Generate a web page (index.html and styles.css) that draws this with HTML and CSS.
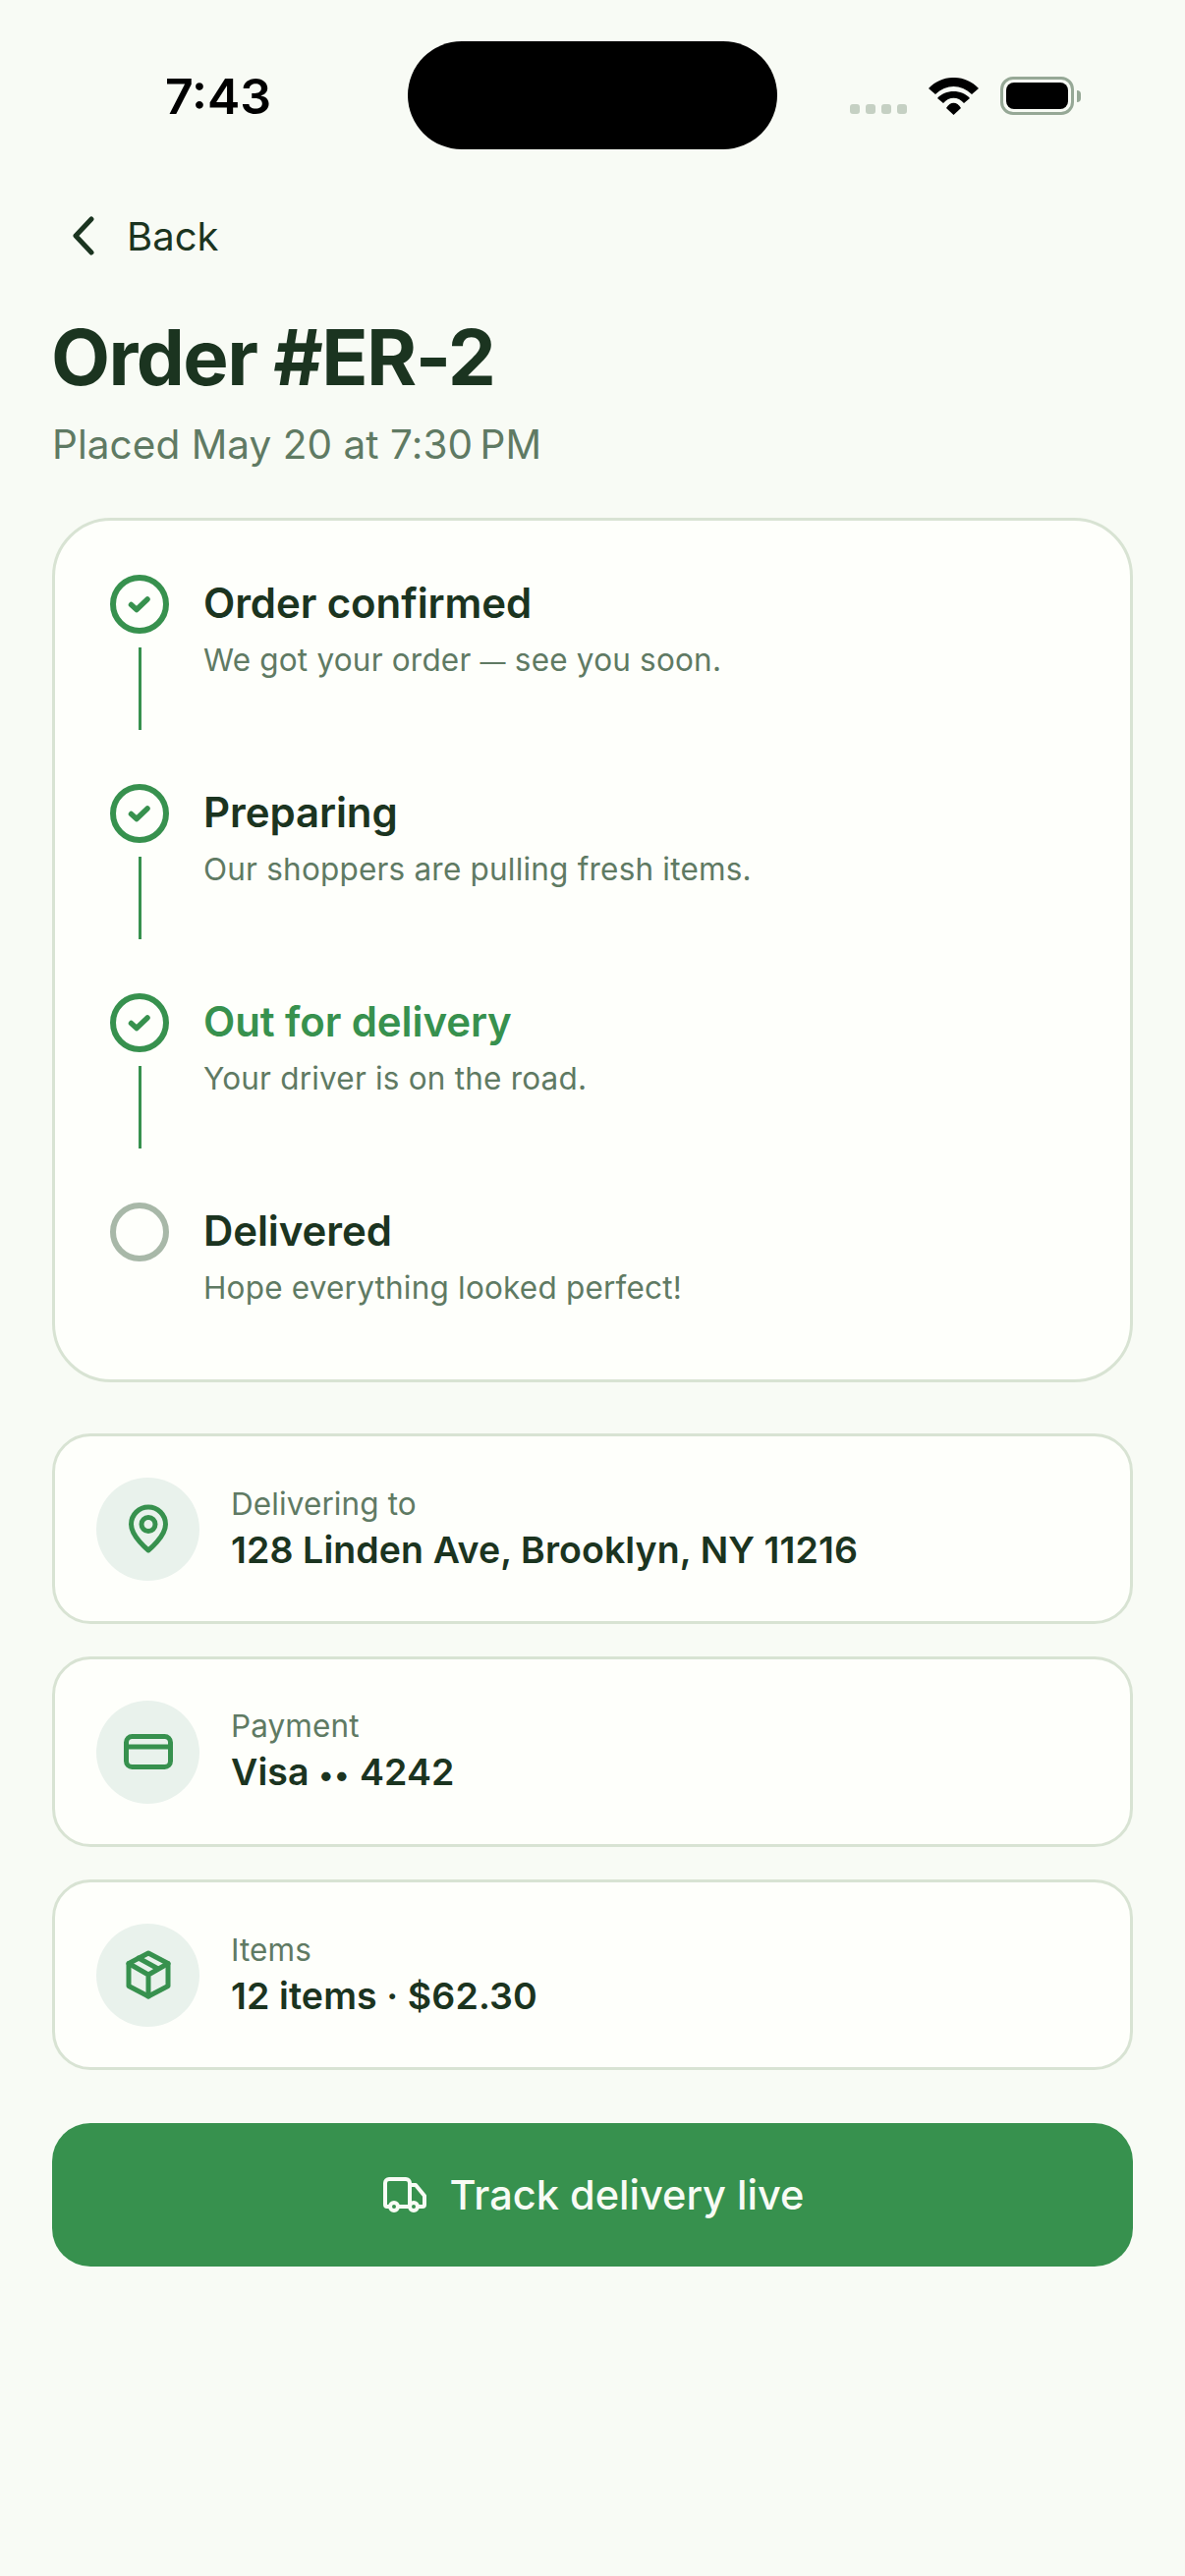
FILE: index.html
```html
<!DOCTYPE html>
<html lang="en">
<head>
    <meta charset="UTF-8">
    <meta name="viewport" content="width=device-width, initial-scale=1.0">
    <title>Order #ER-2</title>
    <link rel="stylesheet" href="styles.css">
</head>
<body>

<div class="status-bar">
    <div class="status-time">7:43</div>
    <div class="island"></div>
    <div class="status-icons">
        <div class="signal"><span></span><span></span><span></span><span></span></div>
        <svg class="wifi" width="51" height="38" viewBox="0 0 51 38">
            <path d="M0 11 C14 -3.7 37 -3.7 51 11 L44 17 C33 6.3 18 6.3 7 17 Z"/>
            <path d="M9 21 C17 11.7 34 11.7 42 21 L36 26 C30 19 21 19 15 26 Z"/>
            <path d="M18 31 C22 24 29 24 33 31 L25.5 38 Z"/>
        </svg>
        <div class="battery"><div class="battery-level"></div></div>
        <div class="battery-cap"></div>
    </div>
</div>

<div class="page">
    <a class="back" href="#">
        <svg width="36" height="48" viewBox="0 0 36 48"><path d="M27 7 L11 24 L27 41"/></svg>
        <span>Back</span>
    </a>
    <h1>Order #ER-2</h1>
    <p class="placed">Placed May 20 at 7:30&#8201;PM</p>

    <div class="card timeline">
        <div class="step">
            <div class="marker">
                <div class="circle"><svg width="30" height="30" viewBox="0 0 30 30"><path d="M6.5 15.5 L12 20.5 L23 10"/></svg></div>
                <div class="line"></div>
            </div>
            <div class="step-text">
                <div class="step-title">Order confirmed</div>
                <div class="step-sub">We got your order <span class="dash">—</span> see you soon.</div>
            </div>
        </div>
        <div class="step">
            <div class="marker">
                <div class="circle"><svg width="30" height="30" viewBox="0 0 30 30"><path d="M6.5 15.5 L12 20.5 L23 10"/></svg></div>
                <div class="line"></div>
            </div>
            <div class="step-text">
                <div class="step-title">Preparing</div>
                <div class="step-sub">Our shoppers are pulling fresh items.</div>
            </div>
        </div>
        <div class="step">
            <div class="marker">
                <div class="circle"><svg width="30" height="30" viewBox="0 0 30 30"><path d="M6.5 15.5 L12 20.5 L23 10"/></svg></div>
                <div class="line"></div>
            </div>
            <div class="step-text">
                <div class="step-title current">Out for delivery</div>
                <div class="step-sub">Your driver is on the road.</div>
            </div>
        </div>
        <div class="step">
            <div class="marker">
                <div class="circle pending"></div>
            </div>
            <div class="step-text">
                <div class="step-title">Delivered</div>
                <div class="step-sub">Hope everything looked perfect!</div>
            </div>
        </div>
    </div>

    <div class="card info">
        <div class="info-icon">
            <svg width="48" height="60" viewBox="0 0 48 60"><path d="M24 52 C24 52 6.5 38 6.5 25.5 A17.5 17.5 0 0 1 41.5 25.5 C41.5 38 24 52 24 52 Z"/><circle cx="24" cy="25.5" r="7"/></svg>
        </div>
        <div>
            <div class="info-label">Delivering to</div>
            <div class="info-value">128 Linden Ave, Brooklyn, NY 11216</div>
        </div>
    </div>
    <div class="card info">
        <div class="info-icon">
            <svg width="54" height="54" viewBox="0 0 54 54"><rect x="4.5" y="11.5" width="45" height="31" rx="6"/><path d="M4.5 22 H49.5"/></svg>
        </div>
        <div>
            <div class="info-label">Payment</div>
            <div class="info-value">Visa <span class="dots">••</span> 4242</div>
        </div>
    </div>
    <div class="card info">
        <div class="info-icon">
            <svg width="54" height="54" viewBox="0 0 54 54"><path d="M27 5 L47 15.5 V38.5 L27 49 L7 38.5 V15.5 Z"/><path d="M7 15.5 L27 27 L47 15.5 M27 27 V49 M17 10 L37 21"/></svg>
        </div>
        <div>
            <div class="info-label">Items</div>
            <div class="info-value">12 items · $62.30</div>
        </div>
    </div>

    <button class="track" type="button">
        <svg width="44" height="36" viewBox="0 0 44 36"><path d="M7 30 H4 A2 2 0 0 1 2 28 V6 A4 4 0 0 1 6 2 H23 A4 4 0 0 1 27 6 V30 H15 M27 8 H33 L42 19 V28 A2 2 0 0 1 40 30 H35"/><circle cx="11" cy="30" r="4"/><circle cx="31" cy="30" r="4"/></svg>
        <span>Track delivery live</span>
    </button>
</div>

</body>
</html>
```
FILE: styles.css
```css
* {
    box-sizing: border-box;
}
body {
    margin: 0;
    width: 1206px;
    height: 2622px;
    background-color: #f8fbf5;
    font-family: Inter, "Liberation Sans", sans-serif;
    color: #1b3420;
    overflow: hidden;
}

/* status bar */
.status-bar {
    position: relative;
    height: 210px;
}
.status-time {
    position: absolute;
    left: 168px;
    top: 68px;
    font-size: 50px;
    line-height: 60px;
    font-weight: 600;
    color: #000;
}
.island {
    position: absolute;
    left: 415px;
    top: 42px;
    width: 376px;
    height: 110px;
    background: #000;
    border-radius: 55px;
}
.status-icons {
    position: absolute;
    left: 865px;
    top: 78px;
    display: flex;
    align-items: center;
}
.signal {
    display: flex;
    gap: 6px;
    margin-top: 27px;
    margin-right: 22px;
}
.signal span {
    width: 10px;
    height: 10px;
    border-radius: 3px;
    background: #c5d0c3;
}
.wifi {
    fill: #000;
    margin-right: 22px;
}
.battery {
    width: 75px;
    height: 39px;
    border: 3px solid #96a896;
    border-radius: 13px;
    padding: 3px;
}
.battery-level {
    height: 100%;
    background: #000;
    border-radius: 8px;
}
.battery-cap {
    width: 4px;
    height: 12px;
    margin-left: 3px;
    background: #96a896;
    border-radius: 0 5px 5px 0;
}

.page {
    padding: 0 53px;
}

.back {
    display: flex;
    align-items: center;
    gap: 27px;
    height: 60px;
    margin-left: 13px;
    color: #1b3420;
    text-decoration: none;
    font-size: 40px;
}
.back svg path {
    fill: none;
    stroke: #1b3420;
    stroke-width: 5;
    stroke-linecap: round;
    stroke-linejoin: round;
}
h1 {
    margin: 49px 0 0 -1px;
    font-size: 78px;
    line-height: 90px;
    font-weight: 700;
    letter-spacing: -1.6px;
}
.placed {
    margin: 17px 0 0;
    font-size: 40.5px;
    line-height: 54px;
    letter-spacing: 0.05px;
    color: #5f7a63;
}

.card {
    background: #fefffb;
    border: 3px solid #d8e3d3;
}
.timeline {
    margin-top: 47px;
    padding: 55px 56px 0;
    height: 880px;
    border-radius: 60px;
}
.step {
    display: flex;
    gap: 35px;
    height: 213px;
}
.marker {
    display: flex;
    flex-direction: column;
    align-items: center;
    width: 60px;
}
.circle {
    display: flex;
    align-items: center;
    justify-content: center;
    width: 60px;
    height: 60px;
    border: 6px solid #37914e;
    border-radius: 50%;
}
.circle svg path {
    fill: none;
    stroke: #37914e;
    stroke-width: 5.5;
    stroke-linecap: round;
    stroke-linejoin: round;
}
.circle.pending {
    border-color: #a8b8a8;
}
.line {
    width: 3px;
    height: 84px;
    margin-top: 14px;
    background: #37914e;
}
.step-title {
    font-size: 42px;
    line-height: 52px;
    font-weight: 600;
    margin-top: 3px;
    letter-spacing: -0.1px;
}
.step-title.current {
    color: #37914e;
}
.step-sub {
    margin-top: 9px;
    font-size: 31.5px;
    line-height: 46px;
    letter-spacing: 0.2px;
    color: #5f7a63;
}
.dash {
    font-size: 26px;
}

.info {
    display: flex;
    align-items: center;
    gap: 32px;
    height: 194px;
    margin-top: 33px;
    padding: 0 42px;
    border-radius: 39px;
}
.timeline + .info {
    margin-top: 52px;
}
.info-icon {
    display: flex;
    align-items: center;
    justify-content: center;
    width: 105px;
    height: 105px;
    border-radius: 50%;
    background: #e9f2ec;
}
.info-icon svg {
    fill: none;
    stroke: #37914e;
    stroke-width: 5;
    stroke-linecap: round;
    stroke-linejoin: round;
}
.info-label {
    font-size: 31.5px;
    line-height: 42px;
    letter-spacing: 0.1px;
    color: #5f7a63;
}
.info-value {
    font-size: 37.5px;
    line-height: 48px;
    font-weight: 600;
    margin-top: 2px;
    letter-spacing: 0.1px;
}
.dots {
    font-size: 30px;
    letter-spacing: 1px;
}

.track {
    display: flex;
    align-items: center;
    justify-content: center;
    gap: 24px;
    width: 100%;
    height: 146px;
    margin-top: 54px;
    padding-left: 8px;
    border: none;
    border-radius: 39px;
    background-color: #37914e;
    color: #f8fbf5;
    font-family: inherit;
    font-size: 41.5px;
    font-weight: 550;
}
.track svg {
    fill: none;
    stroke: #f8fbf5;
    stroke-width: 4;
    stroke-linecap: round;
    stroke-linejoin: round;
}
```
